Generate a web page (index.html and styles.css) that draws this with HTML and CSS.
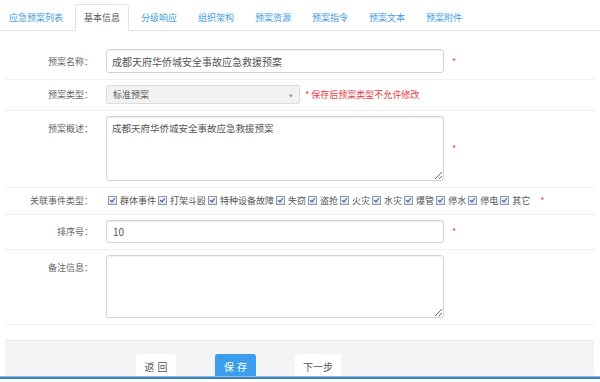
FILE: index.html
```html
<!DOCTYPE html>
<html>

<head>
    <meta charset="utf-8">
    <title>基本信息</title>

    <link rel="stylesheet" href="styles.css">
</head>

<body>

    <div class="viewport">
        <ul class="tabs">
            <li class="tab">应急预案列表</li>
            <li class="tab active">基本信息</li>
            <li class="tab">分级响应</li>
            <li class="tab">组织架构</li>
            <li class="tab">预案资源</li>
            <li class="tab">预案指令</li>
            <li class="tab">预案文本</li>
            <li class="tab">预案附件</li>
        </ul>

        <form class="plan-form">
            <div class="row">
                <label class="row-label">预案名称：</label>
                <input class="field field-name" type="text" value="成都天府华侨城安全事故应急救援预案">
                <span class="required">*</span>
            </div>

            <div class="row">
                <label class="row-label">预案类型：</label>
                <div class="select">
                    <span>标准预案</span>
                    <span class="select-arrow">▾</span>
                </div>
                <span class="hint">* 保存后预案类型不允许修改</span>
            </div>

            <div class="row">
                <label class="row-label row-label-top">预案概述：</label>
                <textarea class="field area area-desc">成都天府华侨城安全事故应急救援预案</textarea>
                <span class="required">*</span>
            </div>

            <div class="row">
                <label class="row-label">关联事件类型：</label>
                <div class="checks">
                    <span class="check-item"><i class="check"></i>群体事件</span>
                    <span class="check-item"><i class="check"></i>打架斗殴</span>
                    <span class="check-item"><i class="check"></i>特种设备故障</span>
                    <span class="check-item"><i class="check"></i>失窃</span>
                    <span class="check-item"><i class="check"></i>盗抢</span>
                    <span class="check-item"><i class="check"></i>火灾</span>
                    <span class="check-item"><i class="check"></i>水灾</span>
                    <span class="check-item"><i class="check"></i>爆管</span>
                    <span class="check-item"><i class="check"></i>停水</span>
                    <span class="check-item"><i class="check"></i>停电</span>
                    <span class="check-item"><i class="check"></i>其它</span>
                </div>
                <span class="required">*</span>
            </div>

            <div class="row">
                <label class="row-label">排序号：</label>
                <input class="field field-sort" type="text" value="10">
                <span class="required">*</span>
            </div>

            <div class="row">
                <label class="row-label row-label-top">备注信息：</label>
                <textarea class="field area area-remark"></textarea>
            </div>
        </form>

        <div class="footer">
            <button class="btn">返回</button>
            <button class="btn btn-primary">保存</button>
            <button class="btn btn-next">下一步</button>
        </div>
    </div>

    <div class="frame-edge"></div>

</body>

</html>
```

FILE: styles.css
```css
/* Page */

body {
    margin: 0;
    background: #fff;
    font-family: "Noto Sans CJK SC", "Liberation Sans", sans-serif;
    color: #555;
}

.viewport {
    height: 376px;
    overflow: hidden;
}

.frame-edge {
    height: 1px;
    background: #8fbbe2;
    border-bottom: 2px solid #3a7fc0;
}

/* Tabs */

.tabs {
    display: flex;
    gap: 3px;
    margin: 0;
    padding: 4px 0 0 0;
    list-style: none;
    border-bottom: 1px solid #e2e2e2;
}

.tab {
    padding: 0 8px;
    height: 25px;
    line-height: 25px;
    font-size: 9px;
    color: #3d9ae2;
    border: 1px solid transparent;
    border-bottom: none;
    border-radius: 3px 3px 0 0;
}

.tab.active {
    color: #555;
    background: #fff;
    border-color: #e2e2e2;
    margin-bottom: -1px;
    height: 26px;
}

/* Form rows */

.plan-form {
    margin: 0 5px;
    padding-top: 13px;
}

.row {
    display: flex;
    align-items: center;
    padding: 5px 0 6px;
    border-bottom: 1px solid #f0f0f0;
}

.row-label {
    width: 88px;
    margin-right: 13px;
    text-align: right;
    font-size: 9px;
    color: #666;
}

.row-label-top {
    align-self: flex-start;
    padding-top: 6px;
}

.field {
    box-sizing: border-box;
    width: 338px;
    border: 1px solid #d4d4d4;
    border-radius: 3px;
    box-shadow: inset 0 1px 1px rgba(0, 0, 0, 0.06);
    font-family: inherit;
    color: #555;
    outline: none;
}

.field-name {
    height: 24px;
    padding: 0 5px;
    font-size: 10px;
}

.field-sort {
    height: 23px;
    padding: 0 6px;
    font-size: 10px;
}

.area {
    margin: 0;
    padding: 4px 5px;
    font-size: 9.5px;
    line-height: 14px;
}

.area-desc {
    height: 65px;
}

.area-remark {
    height: 63px;
}

.required {
    margin-left: 8px;
    font-size: 9px;
    color: #e8474c;
}

/* Select */

.select {
    box-sizing: border-box;
    display: flex;
    justify-content: space-between;
    align-items: center;
    width: 194px;
    height: 19px;
    padding: 0 6px;
    border: 1px solid #dcdcdc;
    border-radius: 2px;
    background: #f2f2f2;
    font-size: 9px;
    color: #555;
}

.select-arrow {
    font-size: 7px;
    color: #999;
}

.hint {
    margin-left: 5px;
    font-size: 9px;
    color: #e8393e;
}

/* Checkboxes */

.checks {
    display: flex;
    align-items: center;
    height: 15px;
    padding-left: 2px;
    font-size: 9px;
    color: #555;
}

.check-item {
    display: flex;
    align-items: center;
    margin-right: 2px;
}

.check {
    position: relative;
    box-sizing: border-box;
    width: 9px;
    height: 9px;
    margin-right: 3px;
    border: 1px solid #8e99a8;
    background: linear-gradient(#f4f6f9, #dfe3ea);
}

.check::after {
    content: "";
    position: absolute;
    left: 2px;
    top: 0;
    width: 2px;
    height: 4px;
    border: solid #2b4fa6;
    border-width: 0 1.5px 1.5px 0;
    transform: rotate(40deg);
}

/* Footer buttons */

.footer {
    display: flex;
    align-items: flex-start;
    gap: 39px;
    margin: 15px 6px 0 5px;
    padding: 13px 0 0 131px;
    height: 40px;
    background: #f4f4f4;
    border-top: 1px solid #e8e8e8;
}

.btn {
    height: 24px;
    width: 40px;
    padding: 0;
    border: none;
    border-radius: 3px;
    background: #fff;
    font-family: inherit;
    font-size: 10px;
    letter-spacing: 3px;
    text-indent: 3px;
    color: #555;
}

.btn-primary {
    width: 41px;
    background: #3d9ded;
    color: #fff;
}

.btn-next {
    width: 46px;
    letter-spacing: 0;
    text-indent: 0;
}
```
